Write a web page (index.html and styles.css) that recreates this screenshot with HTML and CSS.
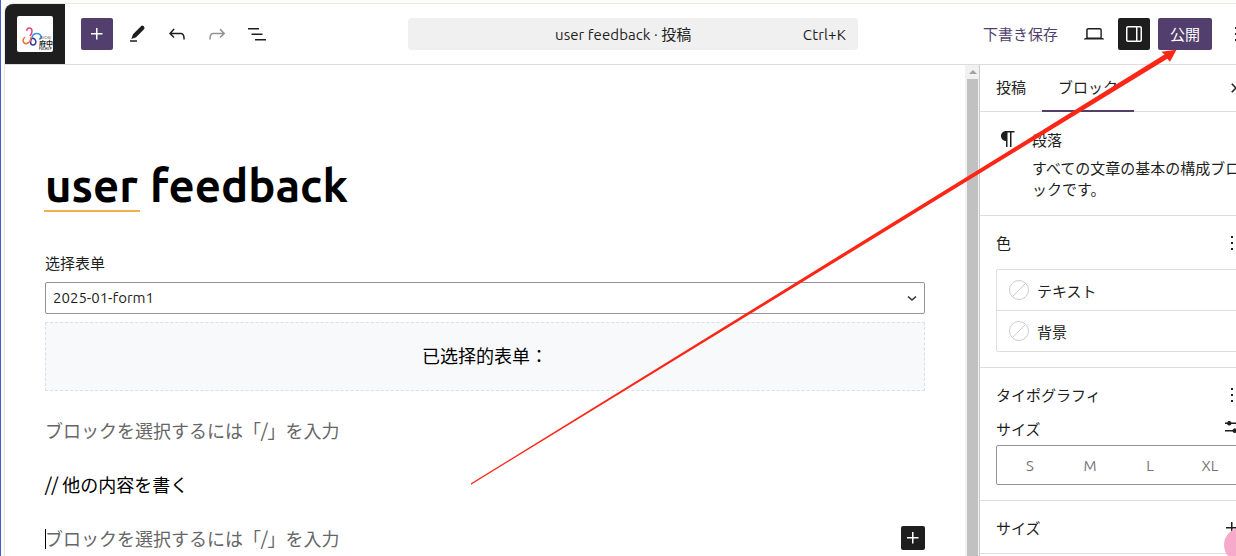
FILE: index.html
```html
<!DOCTYPE html>
<html lang="ja">
<head>
<meta charset="utf-8">
<title>user feedback</title>
<link rel="stylesheet" href="styles.css">
</head>
<body>
<div class="window">
  <header class="header">
    <div class="site-logo">
      <div class="logo-card">
        <svg class="logo-mark" width="36" height="36" viewBox="0 0 36 36" stroke-width="1.500">
          <path d="M10 15C9 11 15 11 15 15c0 2-1 4-2 5" stroke="#e0447e"/>
          <path d="M15 21c1-4 7-5 9-1 1 2 0 3-2 3" stroke="#3996dd"/>
          <path d="M15 22c5 1 5 7 1 7-3 0-3-4-1-7" stroke="#3337a0"/>
          <path d="M8 21c-4 4-1 8 3 6 2-1 3-3 3-6" stroke="#ec7040"/>
        </svg>
        <span class="logo-small">FUCHU</span>
        <span class="logo-name">府中</span>
        <span class="logo-en">FUCHU P</span>
      </div>
    </div>
    <div class="tools">
      <button class="icon-btn primary"><svg viewBox="0 0 24 24"><path d="M11 12.500V17.500H12.500V12.500H17.500V11H12.500V6H11V11H6V12.500H11Z"/></svg></button>
      <button class="icon-btn"><svg viewBox="0 0 24 24"><path d="M18.700 4.300a1.900 1.900 0 0 0-2.700 0L8 12.200 6.300 17 11.100 15.300l7.900-8a2.100 2.100 0 0 0-.3-3ZM5 18.300h7v1.500H5Z"/></svg></button>
      <button class="icon-btn"><svg viewBox="0 0 24 24"><path d="M18.300 11.700c-.6-.6-1.400-.9-2.300-.9H6.700l2.900-3.300-1.100-1-4.500 5L8.500 16l1-1-2.700-2.700H16c.5 0 .9.2 1.300.5 1 1 1 3.400 1 4.500v.3h1.500v-.2c0-1.500 0-4.300-1.500-5.700z"/></svg></button>
      <button class="icon-btn disabled"><svg viewBox="0 0 24 24"><path d="M15.600 6.500l-1.100 1 2.900 3.300H8c-.9 0-1.700.3-2.300.9-1.400 1.500-1.400 4.200-1.400 5.600v.2h1.500v-.3c0-1.100 0-3.500 1-4.500.3-.3.7-.5 1.300-.5h9.200L14.500 15l1.100 1.100 4.600-4.600-4.600-5z"/></svg></button>
      <button class="icon-btn"><svg viewBox="0 0 24 24"><path d="M3 6h11v1.500H3V6Zm3.500 5.500h11V13h-11v-1.500ZM21 17H10v1.500h11V17Z"/></svg></button>
    </div>
    <div class="command-bar"><span class="doc-name">user feedback · 投稿</span><span class="shortcut">Ctrl+K</span></div>
    <div class="actions">
      <span class="save-draft">下書き保存</span>
      <button class="icon-btn"><svg viewBox="0 0 24 24"><path d="M20.500 16h-.7V8c0-1.100-.9-2-2-2H6.200c-1.100 0-2 .9-2 2v8h-.7c-.8 0-1.500.7-1.500 1.500h20c0-.8-.7-1.500-1.500-1.500zM5.700 8c0-.3.2-.5.5-.5h11.700c.3 0 .5.2.5.5v7.600H5.700V8z"/></svg></button>
      <button class="icon-btn dark"><svg viewBox="0 0 24 24"><path d="M18 4H6c-1.100 0-2 .9-2 2v12c0 1.100.9 2 2 2h12c1.100 0 2-.9 2-2V6c0-1.100-.9-2-2-2zm-4 14.500H6c-.3 0-.5-.2-.5-.5V6c0-.3.2-.5.5-.5h8v13zm4.500-.5c0 .3-.2.5-.5.5h-2.500v-13H18c.3 0 .5.2.5.500v12z"/></svg></button>
      <button class="publish">公開</button>
      <button class="icon-btn"><svg viewBox="0 0 24 24"><path d="M13 19h-2v-2h2v2zm0-6h-2v-2h2v2zm0-6h-2V5h2v2z"/></svg></button>
    </div>
  </header>
  <div class="body">
    <main class="canvas">
      <h1 class="title"><span class="misspelled">user</span><span>feedback</span></h1>
      <label class="form-label" lang="zh-CN">选择表单</label>
      <div class="select"><span>2025-01-form1</span><svg class="chevron" viewBox="0 0 12 12"><path d="M2 4.500 6 8l4-3.500" fill="none" stroke="#333" stroke-width="1.600"/></svg></div>
      <div class="preview" lang="zh-CN"><span>已选择的表单<span lang="zh-TW">：</span></span></div>
      <p class="para placeholder first">ブロックを選択するには「/」を入力</p>
      <p class="para">// 他の内容を書く</p>
      <div class="last-row">
        <p class="para placeholder"><span class="caret"></span>ブロックを選択するには「/」を入力</p>
        <button class="inserter"><svg viewBox="0 0 24 24"><path d="M11 12.500V17.500H12.500V12.500H17.500V11H12.500V6H11V11H6V12.500H11Z"/></svg></button>
      </div>
    </main>
    <div class="scrollbar"><span class="scroll-up"></span><span class="thumb"></span></div>
    <aside class="sidebar">
      <div class="tabs">
        <span class="tab">投稿</span><span class="tab active">ブロック</span>
        <svg class="close" viewBox="0 0 24 24"><path d="M12 13.060l3.712 3.713 1.061-1.060L13.061 12l3.712-3.712-1.060-1.060L12 10.938 8.288 7.227l-1.061 1.060L10.939 12l-3.712 3.712 1.060 1.061L12 13.061z"/></svg>
      </div>
      <section class="block-card">
        <svg class="icon" viewBox="0 0 24 24"><path d="m9.996 14v-.225l.004 0v6.225h1.500v-14.500h2.500v14.500h1.500v-14.500h3v-1.500h-8.504c-2.761 0-5 2.239-5 5 0 2.761 2.239 5 5 5z"/></svg>
        <div><div class="block-name">段落</div><div class="block-desc">すべての文章の基本の構成ブロ<br>ックです。</div></div>
      </section>
      <section class="panel color-panel">
        <div class="panel-head"><span>色</span><svg class="icon" viewBox="0 0 24 24"><path d="M13 19h-2v-2h2v2zm0-6h-2v-2h2v2zm0-6h-2V5h2v2z"/></svg></div>
        <div class="color-list">
          <div class="color-item"><span class="swatch"></span><span>テキスト</span></div>
          <div class="color-item"><span class="swatch"></span><span>背景</span></div>
        </div>
      </section>
      <section class="panel type-panel">
        <div class="panel-head"><span>タイポグラフィ</span><svg class="icon" viewBox="0 0 24 24"><path d="M13 19h-2v-2h2v2zm0-6h-2v-2h2v2zm0-6h-2V5h2v2z"/></svg></div>
        <div class="size-head"><span>サイズ</span><svg class="icon" viewBox="0 0 24 24"><path d="m19 7.500h-7.628c-.309-.874-1.142-1.500-2.122-1.500s-1.813.626-2.122 1.500H5v1.500h2.128c.309.874 1.142 1.500 2.122 1.500s1.813-.626 2.122-1.500H19z"/><path d="M19 15h-2.128c-.309-.874-1.142-1.500-2.122-1.500s-1.813.626-2.122 1.500H5v1.500h7.628c.309.874 1.142 1.500 2.122 1.500s1.813-.626 2.122-1.500H19z"/></svg></div>
        <div class="sizes"><span>S</span><span>M</span><span>L</span><span>XL</span></div>
      </section>
      <section class="panel size-panel">
        <div class="panel-head"><span>サイズ</span><svg class="icon" viewBox="0 0 24 24"><path d="M11 12.500V17.500H12.500V12.500H17.500V11H12.500V6H11V11H6V12.500H11Z"/></svg></div>
      </section>
    </aside>
  </div>
</div>
<span class="bubble"></span>
<svg class="arrow" viewBox="0 0 1236 556"><path d="M471 483.300 1164.500 54.600 1161.500 51.800 1176.500 49.800 1170 61.800 1167.300 58.800 471 484.700Z" fill="#fb2616"/></svg>
</body>
</html>
```
FILE: styles.css
```css
* { box-sizing: border-box; }
body {
  margin: 0; width: 1236px; height: 556px; overflow: hidden; position: relative;
  background: #fbfbf9; border-left: 1px solid #4a5cc4;
  font: 15px/20px Ubuntu, "Noto Sans", "Noto Sans CJK JP", sans-serif; color: #1e1e1e;
}
:lang(zh-CN) { font-family: Ubuntu, "Noto Sans", "Noto Sans CJK SC", sans-serif; }
:lang(zh-TW) { font-family: "Noto Sans CJK TC", sans-serif; line-height: 1; }
button { border: 0; padding: 0; margin: 0; background: none; font: inherit; color: inherit; }
svg { display: block; fill: currentColor; }
.window { margin: 3px 0 0 3px; height: 553px; border: 1px solid #e9e8e6; border-width: 1px 0 0 1px; border-top-left-radius: 9px; background: #fff; overflow: hidden; }
.header { display: flex; height: 61px; border-bottom: 1px solid #ddd; align-items: center; }
.site-logo { width: 60px; height: 60px; background: #1e1e1e; display: grid; place-items: center; flex: none; }
.logo-card { position: relative; width: 36px; height: 36px; background: #fff; border-radius: 2px; white-space: nowrap; color: #222; }
.logo-mark { fill: none; }
.logo-card span { position: absolute; }
.logo-small { left: 23px; top: 20px; font-size: 3.500px; line-height: 5px; }
.logo-name { left: 22px; top: 23px; font-size: 7px; line-height: 8px; font-weight: 700; }
.logo-en { left: 22px; top: 31px; font-size: 3px; line-height: 5px; font-weight: 700; }
.tools { display: flex; gap: 8px; margin-left: 16px; width: 327px; flex: none; }
.icon-btn { width: 32px; height: 32px; display: grid; place-items: center; border-radius: 2px; flex: none; }
.icon-btn svg, .icon { width: 24px; height: 24px; flex: none; }
.primary, .publish { background: #523f6d; color: #fff; }
.disabled { color: #949494; }
.dark { background: #1e1e1e; color: #fff; }
.command-bar { width: 450px; height: 32px; background: #f0f0f0; border-radius: 4px; display: flex; align-items: center; padding: 2px 12px 0 147px; justify-content: space-between; flex: none; }
.doc-name { white-space: nowrap; letter-spacing: .07px; }
.shortcut { letter-spacing: .15px; }
.actions { display: flex; gap: 8px; margin-left: 125px; align-items: center; flex: none; }
.save-draft { color: #523f6d; width: 87px; padding-top: 2px; white-space: nowrap; }
.publish { width: 54px; height: 32px; border-radius: 2px; padding-top: 2px; flex: none; }
.body { display: flex; height: 491px; }
.canvas { width: 960px; flex: none; padding: 93px 40px 0; color: #000; }
.title { margin: 0; font-size: 45.500px; line-height: 56px; height: 54px; font-weight: 700; white-space: nowrap; display: flex; gap: 10px; }
.misspelled { border-bottom: 2px solid #f0b04c; width: 96px; height: 54px; margin-left: -1px; padding-left: 1px; }
.form-label { display: block; margin-top: 42px; color: #1e1e1e; line-height: 20px; height: 28px; }
.select { height: 32px; border: 1px solid #949494; border-radius: 2px; display: flex; align-items: center; justify-content: space-between; padding: 0 6px 0 7px; color: #1e1e1e; }
.chevron { width: 12px; height: 12px; }
.preview { margin-top: 8px; height: 69px; background: #f8f9fb; border: 1px dashed #dcdfe5; display: flex; align-items: center; justify-content: center; font-size: 18px; padding-bottom: 2px; }
.para { margin: 24px 0 0; font-size: 18px; line-height: 30px; white-space: nowrap; }
.first { margin-top: 25px; }
.placeholder { color: #666; }
.last-row { display: flex; justify-content: space-between; align-items: flex-end; }
.last-row .para { display: flex; align-items: center; }
.caret { width: 1px; height: 20px; background: #000; margin-right: -1px; }
.inserter { width: 24px; height: 24px; background: #1e1e1e; color: #fff; border-radius: 2px; margin-bottom: 4px; }
.inserter svg { width: 24px; height: 24px; }
.scrollbar { width: 14px; flex: none; background: #f1f1f1; padding: 5px 1px 0 2px; }
.scroll-up { display: block; width: 0; margin-left: 2px; border: 4px solid transparent; border-top: 0; border-bottom-color: #a3a3a3; }
.thumb { display: block; height: 482px; margin-top: 5px; background: #c1c1c1; }
.sidebar { width: 281px; flex: none; border-left: 1px solid #ccc; white-space: nowrap; }
.tabs { display: flex; height: 47px; border-bottom: 1px solid #ddd; align-items: center; }
.tab { padding: 13px 16px 0; height: 47px; }
.active { border-bottom: 2px solid #523f6d; width: 92px; }
.close { width: 24px; height: 24px; margin-left: 90px; flex: none; }
.block-card { display: flex; gap: 12px; height: 104px; padding: 16px 16px 0; border-bottom: 1px solid #ddd; }
.block-card .icon { margin-top: -1px; }
.block-name { padding-top: 3px; height: 30px; }
.block-desc { line-height: 21px; }
.panel { padding: 0 16px; border-bottom: 1px solid #ddd; }
.color-panel { height: 152px; }
.panel-head { display: flex; justify-content: space-between; align-items: center; height: 53px; width: 248px; }
.panel-head span { padding-top: 2px; }
.color-list { border: 1px solid #ddd; border-radius: 2px; height: 83px; }
.color-item { display: flex; align-items: center; gap: 8px; padding: 1px 0 0 12px; height: 40px; }
.color-item + .color-item { border-top: 1px solid #ddd; height: 41px; }
.color-item span + span { padding-top: 3px; }
.swatch { width: 20px; height: 20px; border: 1px solid #ccc; border-radius: 50%; background: linear-gradient(135deg, transparent 48%, #ccc 48%, #ccc 52%, transparent 52%); margin-top: -2px; }
.type-panel { height: 133px; }
.size-head { display: flex; justify-content: space-between; height: 24px; margin-top: -6px; margin-bottom: 6px; width: 248px; align-items: center; }
.size-head span { padding-top: 6px; }
.sizes { display: flex; border: 1px solid #949494; border-radius: 2px; height: 40px; align-items: center; padding: 2px 3px 0; color: #757575; }
.sizes span { width: 60px; flex: none; text-align: center; }
.size-panel { height: 53px; }
.bubble { position: absolute; left: 1223px; top: 528px; width: 34px; height: 34px; border-radius: 50%; background: #f7a9cb; }
.arrow { position: absolute; left: -1px; top: 0; width: 1236px; height: 556px; }
```
